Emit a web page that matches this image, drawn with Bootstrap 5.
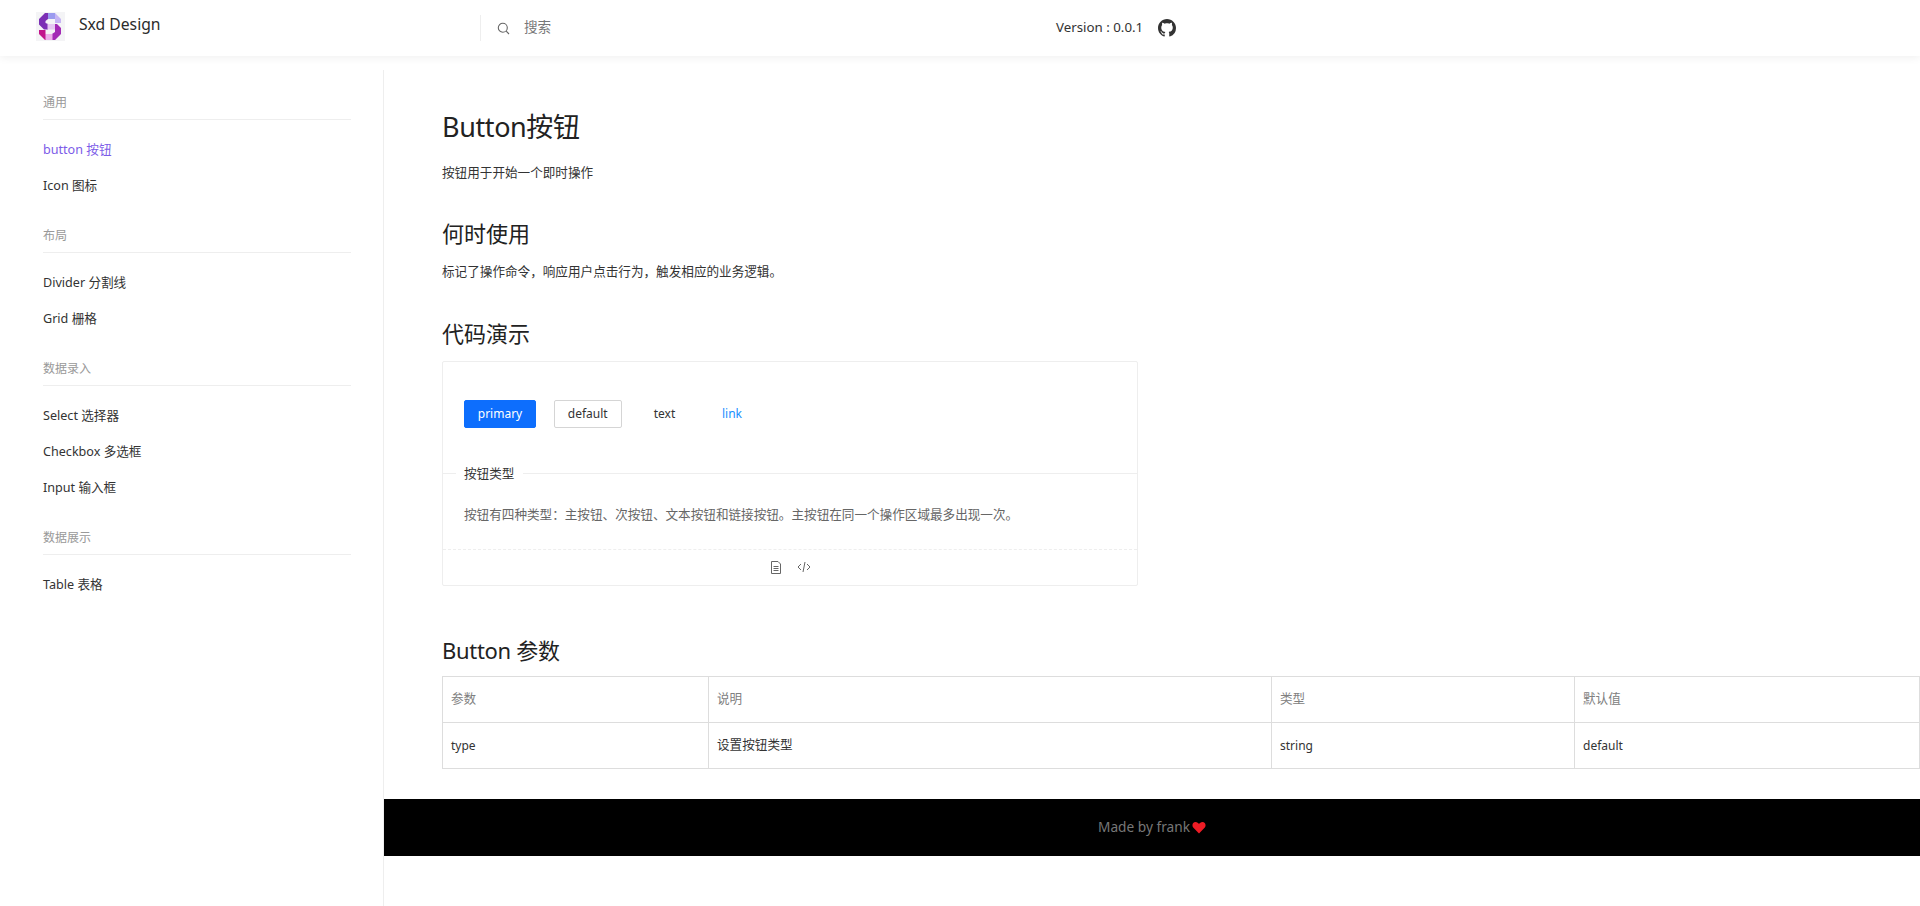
<!DOCTYPE html>
<html lang="zh">
<head>
<meta charset="utf-8">
<title>Sxd Design</title>
<link href="https://cdn.jsdelivr.net/npm/bootstrap@5.3.0/dist/css/bootstrap.min.css" rel="stylesheet">
<style>
html,body{height:906px;overflow:hidden;background:#fff}
body{font-family:"Noto Sans","Noto Sans CJK SC",sans-serif;color:#333;font-size:14px}
.top-bar{height:56px;box-shadow:0 2px 8px rgba(0,0,0,.06);background:#fff;position:relative;z-index:2}
.brand-box{width:480px;padding-left:36px;gap:14px;margin-top:-3px}
.brand-name{font-size:15.700px;color:#2b2b2b;margin-top:-3px}
.search-box{width:576px;height:26px;border-left:1px solid #eee;padding-left:16px;gap:14px;color:#777;font-size:13.600px;margin-top:0}
.search-box span{margin-top:-1px}
.ver-text{font-size:13.300px;color:#333;gap:15px}
.page-body{height:850px}
.side-col{width:384px;flex:none;margin-top:14px;border-right:1px solid #eee;padding:15px 32px 0 43px}
.group-title{font-size:12px;color:#999;height:35px;line-height:35px;border-bottom:1px solid #eee;margin-bottom:12px}
.side-link{display:block;height:36px;line-height:36px;font-size:12.600px;color:#333;text-decoration:none}
.side-link.on{color:#7c5ce8}
.side-group{margin-bottom:14px}
.main-col{flex:1;min-width:0;margin-top:14px}
.main-inner{padding:39px 0 0 58px}
.doc-h1{font-size:27px;font-weight:400;line-height:36px;color:#222;margin:0 0 18px;letter-spacing:-.4px}
.doc-h2{font-size:22px;font-weight:400;line-height:30px;color:#222;margin:0 0 14px}
.doc-h2.to-box{margin-bottom:12.500px}
.doc-h2.to-table{margin-bottom:11px}
.doc-h2.latin-head{letter-spacing:-.3px}
.doc-p{font-size:12.600px;line-height:20px;color:#333;margin:0 0 35px}
.doc-p.far{margin-bottom:36px}
.demo-box{width:696px;height:225px;border:1px solid #eee;border-radius:2px;margin-bottom:49px}
.demo-btns{height:111px;padding:38px 21px 0;gap:17.500px}
.demo-btn{height:28px;font-size:12px;line-height:26px;padding:0;border-radius:2px}
.demo-btn.b1{width:72px;background:#0d6efd;border-color:#0d6efd;color:#fff}
.demo-btn.b2{width:68.500px;background:#fff;border:1px solid #d5d5d5;color:#333}
.demo-btn.b3{width:50px;border-color:transparent;color:#333}
.demo-btn.b4{width:50px;border-color:transparent;color:#1890ff}
.demo-rule{border-top:1px solid #eee;height:0;position:relative}
.demo-rule span{position:absolute;left:13px;top:-10px;background:#fff;padding:0 9px 0 8px;font-size:12.600px;line-height:20px;color:#333}
.demo-desc{height:76px;padding:31px 21px 0;font-size:12.600px;line-height:20px;color:#666;border-bottom:1px dashed #eee}
.demo-foot{height:35px;gap:15px;color:#777}
.arg-table{width:1478px;margin:0;font-size:12.600px;border-color:#ddd;table-layout:fixed}
.arg-table th,.arg-table td{height:46px;padding:1px 8px 0;vertical-align:middle;color:#333;font-weight:400}
.arg-table th{color:#808080}
.arg-table td.latin-cell{font-size:12px}
.arg-table thead,.arg-table tbody,.arg-table tr{border-color:#ddd}
.foot-bar{height:57px;background:#000;color:#777;font-size:13.700px;margin-top:30px;gap:2px}
</style>
</head>
<body>
<header class="top-bar d-flex align-items-center">
  <div class="brand-box d-flex align-items-center">
    <svg width="29" height="29" viewBox="0 0 29 29" aria-hidden="true">
      <rect width="29" height="29" fill="#f4f4f6"/>
      <polygon points="3,7 9,1 12,1 12,7 9.500,9 9.500,11 12,12 12,17.500 8,17.500 3,12.500" fill="#7b2fb5"/>
      <polygon points="12,1 19,1 19,7 12,7" fill="#9b9bef"/>
      <polygon points="19,1 25,7 25,11 19,11 19,7" fill="#c6b5f4"/>
      <polygon points="11.500,12 19.500,12 19.500,17.500 11.500,17.500" fill="#e6c8f2"/>
      <polygon points="19,12 21,12 25,16 25,22 19,28 16,28 16,22 19,20 19,18" fill="#a32ab5"/>
      <polygon points="9,22 16.500,22 16.500,28 9,28" fill="#ecaeea"/>
      <polygon points="3,18 9.500,18 9.500,28 9,28 3,22" fill="#c2148c"/>
    </svg>
    <span class="brand-name">Sxd Design</span>
  </div>
  <div class="search-box d-flex align-items-center">
    <svg width="13" height="13" viewBox="0 0 13 13" fill="none" stroke="#666" stroke-width="1.100" aria-hidden="true"><circle cx="5.800" cy="5.800" r="4.500"/><path d="M9.200 9.200 12 12"/></svg>
    <span>搜索</span>
  </div>
  <div class="ver-text d-flex align-items-center">
    <span>Version : 0.0.1</span>
    <svg width="18" height="18" viewBox="0 0 16 16" fill="#333" aria-hidden="true"><path d="M8 0C3.580 0 0 3.580 0 8c0 3.540 2.290 6.530 5.470 7.590.4.070.55-.17.55-.38 0-.19-.01-.82-.01-1.490-2.010.37-2.530-.49-2.690-.94-.09-.23-.48-.94-.82-1.130-.28-.15-.68-.52-.01-.53.630-.01 1.080.58 1.230.82.720 1.210 1.870.87 2.330.66.070-.52.280-.87.510-1.070-1.780-.2-3.640-.89-3.640-3.950 0-.87.310-1.590.820-2.150-.08-.2-.36-1.020.08-2.120 0 0 .67-.21 2.200.82.640-.18 1.320-.27 2-.27s1.360.09 2 .27c1.530-1.040 2.200-.82 2.200-.82.440 1.100.16 1.920.08 2.120.51.560.82 1.270.82 2.150 0 3.070-1.870 3.750-3.650 3.950.29.250.54.730.54 1.480 0 1.070-.01 1.930-.01 2.200 0 .21.150.46.550.38A8.010 8.010 0 0 0 16 8c0-4.420-3.580-8-8-8z"/></svg>
  </div>
</header>
<div class="page-body d-flex">
  <aside class="side-col">
    <div class="side-group"><div class="group-title">通用</div>
      <a class="side-link on" href="#">button 按钮</a><a class="side-link" href="#">Icon 图标</a></div>
    <div class="side-group"><div class="group-title">布局</div>
      <a class="side-link" href="#">Divider 分割线</a><a class="side-link" href="#">Grid 栅格</a></div>
    <div class="side-group"><div class="group-title">数据录入</div>
      <a class="side-link" href="#">Select 选择器</a><a class="side-link" href="#">Checkbox 多选框</a><a class="side-link" href="#">Input 输入框</a></div>
    <div class="side-group"><div class="group-title">数据展示</div>
      <a class="side-link" href="#">Table 表格</a></div>
  </aside>
  <main class="main-col">
    <div class="main-inner">
      <h1 class="doc-h1">Button按钮</h1>
      <p class="doc-p">按钮用于开始一个即时操作</p>
      <h2 class="doc-h2">何时使用</h2>
      <p class="doc-p far">标记了操作命令，响应用户点击行为，触发相应的业务逻辑。</p>
      <h2 class="doc-h2 to-box">代码演示</h2>
      <section class="demo-box">
        <div class="demo-btns d-flex align-items-start">
          <button type="button" class="btn demo-btn b1">primary</button>
          <button type="button" class="btn demo-btn b2">default</button>
          <button type="button" class="btn demo-btn b3">text</button>
          <button type="button" class="btn demo-btn b4">link</button>
        </div>
        <div class="demo-rule"><span>按钮类型</span></div>
        <div class="demo-desc">按钮有四种类型：主按钮、次按钮、文本按钮和链接按钮。主按钮在同一个操作区域最多出现一次。</div>
        <div class="demo-foot d-flex justify-content-center align-items-center">
          <svg width="12" height="13" viewBox="0 0 12 13" fill="none" stroke="#666" aria-hidden="true"><path d="M1.500.5H8L10.500 3V12.500H1.500zM3.500 5.500H8.500M3.500 7.500H8.500M3.500 9.500H8.500"/></svg>
          <svg width="14" height="12" viewBox="0 0 14 12" fill="none" stroke="#666" aria-hidden="true"><path d="M4 3 1 6l3 3M10 3l3 3-3 3M8 1 6 11"/></svg>
        </div>
      </section>
      <h2 class="doc-h2 to-table latin-head">Button 参数</h2>
      <table class="table table-bordered arg-table">
        <colgroup><col style="width:266px"><col style="width:563px"><col style="width:303px"><col></colgroup>
        <thead><tr><th>参数</th><th>说明</th><th>类型</th><th>默认值</th></tr></thead>
        <tbody><tr><td class="latin-cell">type</td><td>设置按钮类型</td><td class="latin-cell">string</td><td class="latin-cell">default</td></tr></tbody>
      </table>
    </div>
    <footer class="foot-bar d-flex justify-content-center align-items-center">
      <span>Made by frank</span>
      <svg width="14" height="13" viewBox="0 0 14 13" aria-hidden="true"><path d="M7 12.500 1.200 6.500C-.4 4.500.6 1 3.600 1 5.200 1 6.300 2 7 3c.7-1 1.800-2 3.400-2 3 0 4 3.500 2.400 5.500z" fill="#ee1c25"/></svg>
    </footer>
  </main>
</div>
</body>
</html>
